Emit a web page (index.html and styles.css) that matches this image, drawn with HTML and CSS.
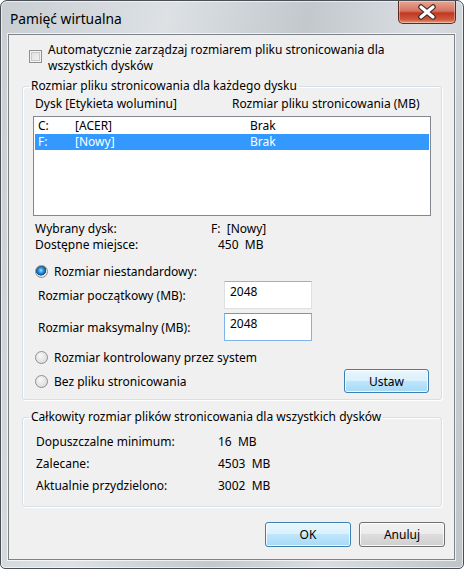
FILE: index.html
```html
<!DOCTYPE html>
<html lang="pl">
<head>
    <meta charset="UTF-8">
    <meta name="viewport" content="width=device-width, initial-scale=1.0">
    <title>Pamięć wirtualna</title>
    <link rel="stylesheet" href="styles.css">
</head>
<body>
    <div class="window">
        <div class="titlebar">
            <span class="title">Pamięć wirtualna</span>
            <div class="close-button">
                <svg width="20" height="16" viewBox="0 0 20 16">
                    <path d="M4 3 L16 13 M16 3 L4 13" stroke="#3b2a2a" stroke-width="5.5" stroke-linecap="round"/>
                    <path d="M4 3 L16 13 M16 3 L4 13" stroke="#ffffff" stroke-width="3.2" stroke-linecap="round"/>
                </svg>
            </div>
        </div>

        <div class="client">
            <div class="auto-row">
                <span class="checkbox"></span>
                <span>Automatycznie zarządzaj rozmiarem pliku stronicowania dla<br>wszystkich dysków</span>
            </div>

            <fieldset class="group group-drives">
                <legend>Rozmiar pliku stronicowania dla każdego dysku</legend>
                <div class="list-header">
                    <span class="col-head">Dysk [Etykieta woluminu]</span>
                    <span>Rozmiar pliku stronicowania (MB)</span>
                </div>
                <div class="drive-list">
                    <div class="drive-row">
                        <span class="col-letter">C:</span>
                        <span class="col-label">[ACER]</span>
                        <span>Brak</span>
                    </div>
                    <div class="drive-row selected">
                        <span class="col-letter">F:</span>
                        <span class="col-label">[Nowy]</span>
                        <span>Brak</span>
                    </div>
                </div>

                <div class="info-row">
                    <span class="info-label">Wybrany dysk:</span>
                    <span class="info-value">F:  [Nowy]</span>
                </div>
                <div class="info-row">
                    <span class="info-label">Dostępne miejsce:</span>
                    <span class="info-value shift">450  MB</span>
                </div>

                <div class="radio-row first-radio">
                    <span class="radio checked"></span>
                    <span>Rozmiar niestandardowy:</span>
                </div>
                <div class="size-row">
                    <span class="size-label">Rozmiar początkowy (MB):</span>
                    <div class="textbox">2048</div>
                </div>
                <div class="size-row">
                    <span class="size-label">Rozmiar maksymalny (MB):</span>
                    <div class="textbox focused">2048</div>
                </div>
                <div class="radio-row second-radio">
                    <span class="radio"></span>
                    <span>Rozmiar kontrolowany przez system</span>
                </div>
                <div class="radio-row last-radio">
                    <span class="radio"></span>
                    <span>Bez pliku stronicowania</span>
                    <button class="button hot set-button">Ustaw</button>
                </div>
            </fieldset>

            <fieldset class="group group-total">
                <legend>Całkowity rozmiar plików stronicowania dla wszystkich dysków</legend>
                <div class="total-row">
                    <span class="total-label">Dopuszczalne minimum:</span>
                    <span>16  MB</span>
                </div>
                <div class="total-row">
                    <span class="total-label">Zalecane:</span>
                    <span>4503  MB</span>
                </div>
                <div class="total-row">
                    <span class="total-label">Aktualnie przydzielono:</span>
                    <span>3002  MB</span>
                </div>
            </fieldset>

            <div class="dialog-buttons">
                <button class="button default">OK</button>
                <button class="button">Anuluj</button>
            </div>
        </div>
    </div>
</body>
</html>
```

FILE: styles.css
```css
body {
    margin: 0;
    padding: 0;
    font-family: 'Noto Sans', 'Liberation Sans', sans-serif;
    font-size: 12px;
    color: #000000;
    background: #ffffff;
}

.window {
    width: 464px;
    height: 569px;
    box-sizing: border-box;
    padding: 0 8px 8px 7px;
    border: 1px solid #4a4f55;
    border-radius: 7px 7px 5px 5px;
    background: linear-gradient(100deg, #c9ced3 0%, #dde1e4 30%, #c3c8cd 55%, #d9dde1 75%, #bfc4c9 100%);
    box-shadow: inset 0 0 0 1px rgba(255, 255, 255, 0.6);
}

.titlebar {
    height: 33px;
    display: flex;
    justify-content: space-between;
    align-items: flex-start;
}

.title {
    padding: 8px 0 0 2px;
    font-size: 13.8px;
    line-height: 20px;
    color: #000000;
}

.close-button {
    width: 58px;
    height: 23px;
    margin-right: -1px;
    box-sizing: border-box;
    border: 1px solid #5b2b22;
    border-top: none;
    border-radius: 0 0 5px 5px;
    background: linear-gradient(#e9a594 0%, #d47460 45%, #c1381f 55%, #d05a3e 85%, #e59e7b 100%);
    box-shadow: inset 0 0 0 1px rgba(255, 255, 255, 0.35);
    display: flex;
    align-items: center;
    justify-content: center;
}

.client {
    height: 526px;
    box-sizing: border-box;
    background: #f0f0f0;
    border: 1px solid #7d8388;
    box-shadow: 0 0 0 1px rgba(255, 255, 255, 0.7);
    overflow: hidden;
}

.auto-row {
    display: flex;
    align-items: flex-start;
    margin: 7px 0 0 20px;
    line-height: 16px;
}

.checkbox {
    width: 13px;
    height: 13px;
    box-sizing: border-box;
    flex-shrink: 0;
    margin: 8px 6px 0 0;
    border: 1px solid #8e8f8f;
    background: linear-gradient(135deg, #dcdcdc, #f6f6f6);
    box-shadow: inset 0 0 0 1px #f4f4f4, inset 0 0 0 2px #c8c8c8;
}

.group {
    margin: 4px 12px 0 13px;
    padding: 0 10px 6px 10px;
    border: 1px solid #d5dfe5;
    border-radius: 3px;
    box-shadow: inset 1px 1px 0 #ffffff, 1px 1px 0 #ffffff;
}

.group legend {
    padding: 0 2px;
    margin-left: -4px;
    line-height: 16px;
}

.list-header {
    display: flex;
    margin-top: 2px;
    padding-left: 2px;
    line-height: 16px;
}

.col-head {
    width: 197px;
}

.drive-list {
    height: 100px;
    margin-top: 4px;
    box-sizing: border-box;
    border: 1px solid #828790;
    background: #ffffff;
    padding: 1px;
}

.drive-row {
    display: flex;
    height: 16px;
    line-height: 16px;
    padding-left: 3px;
}

.drive-row.selected {
    background: #3399ff;
    color: #ffffff;
}

.col-letter {
    width: 37px;
}

.col-label {
    width: 175px;
}

.info-row {
    display: flex;
    line-height: 16px;
    padding-left: 2px;
    white-space: pre;
}

.drive-list + .info-row {
    margin-top: 5px;
}

.info-label {
    width: 176px;
}

.info-value.shift {
    margin-left: 7px;
}

.radio-row {
    display: flex;
    align-items: center;
    height: 16px;
    padding-left: 2px;
}

.first-radio {
    margin-top: 10px;
}

.second-radio {
    margin-top: 8px;
}

.last-radio {
    height: 24px;
    margin-top: 4px;
}

.radio {
    width: 13px;
    height: 13px;
    box-sizing: border-box;
    margin-right: 6px;
    border: 1px solid #8e8f8f;
    border-radius: 50%;
    background: radial-gradient(circle at 40% 35%, #f8f8f8, #d4d4d4);
}

.radio.checked {
    background: radial-gradient(circle at 45% 40%, #9fe0ff 0%, #2a8fd6 30%, #0c4f8e 55%, #e8e8e8 60%, #d0d0d0 100%);
}

.size-row {
    display: flex;
    align-items: center;
    height: 28px;
    margin-top: 2px;
    padding-left: 5px;
}

.size-row + .size-row {
    margin-top: 4px;
}

.size-label {
    width: 186px;
}

.textbox {
    width: 88px;
    height: 28px;
    box-sizing: border-box;
    padding: 2px 0 0 5px;
    line-height: 16px;
    border: 1px solid #dcdfe3;
    border-top-color: #abadb3;
    background: #ffffff;
}

.textbox.focused {
    border-color: #7eb4ea;
    border-top-color: #569de5;
}

.button {
    font-family: inherit;
    font-size: 12px;
    color: #000000;
    width: 86px;
    height: 25px;
    padding: 0;
    border: 1px solid #707070;
    border-radius: 3px;
    background: linear-gradient(#f2f2f2 0%, #ebebeb 49%, #dddddd 50%, #cfcfcf 100%);
    box-shadow: inset 0 0 0 1px rgba(255, 255, 255, 0.8);
}

.button.default {
    border-color: #3c7fb1;
    background: linear-gradient(#eaf6fd 0%, #d9f0fc 49%, #bee6fd 50%, #a7d9f5 100%);
}

.button.hot {
    border-color: #3c7fb1;
    background: linear-gradient(#eaf6fd 0%, #d9f0fc 49%, #bee6fd 50%, #a7d9f5 100%);
}

.set-button {
    width: 85px;
    height: 24px;
    margin-left: auto;
    margin-right: 2px;
}

.group-total {
    margin-top: 9px;
    padding: 5px 10px 10px 10px;
}

.total-row {
    display: flex;
    height: 22px;
    align-items: center;
    padding-left: 3px;
    white-space: pre;
}

.total-label {
    width: 182px;
}

.dialog-buttons {
    display: flex;
    justify-content: flex-end;
    gap: 8px;
    margin: 15px 9px 0 0;
}
```
